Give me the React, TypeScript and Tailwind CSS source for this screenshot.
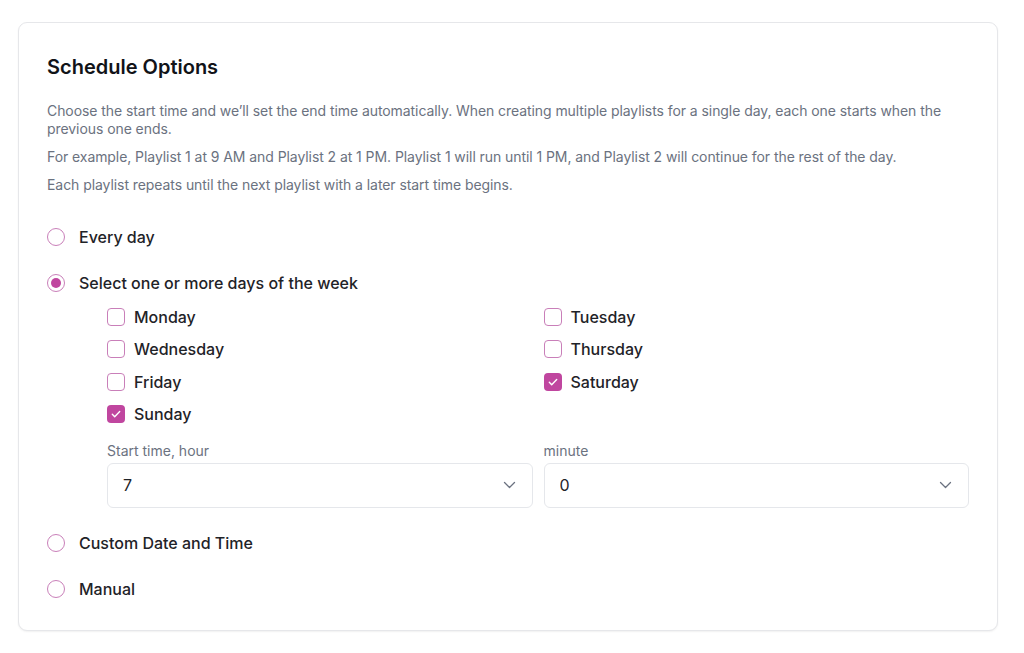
import { useState } from "react";

const DAYS = ["Monday", "Tuesday", "Wednesday", "Thursday", "Friday", "Saturday", "Sunday"];

type Mode = "everyday" | "weekdays" | "custom" | "manual";

function Radio({ checked, label, onClick }: { checked: boolean; label: string; onClick: () => void }) {
  return (
    <button type="button" onClick={onClick} className="flex h-[24px] items-center gap-[14px] text-left">
      <span className="flex h-[18px] w-[18px] items-center justify-center rounded-full border-[1.5px] border-[#c97fb9] bg-white">
        {checked && <span className="h-[10px] w-[10px] rounded-full bg-[#c0469f]" />}
      </span>
      <span className="text-[16px] font-medium text-[#1f2328]">{label}</span>
    </button>
  );
}

function Checkbox({ checked, label, onClick }: { checked: boolean; label: string; onClick: () => void }) {
  return (
    <button type="button" onClick={onClick} className="flex h-[24px] items-center gap-[9px] text-left">
      {checked ? (
        <span className="flex h-[18px] w-[18px] items-center justify-center rounded-[4px] bg-[#c0469f]">
          <svg width="12" height="12" viewBox="0 0 12 12" fill="none" stroke="white" strokeWidth="1.4" strokeLinecap="round" strokeLinejoin="round">
            <path d="M2.3 6.3l2.4 2.4 5-5.2" />
          </svg>
        </span>
      ) : (
        <span className="h-[18px] w-[18px] rounded-[4px] border-[1.5px] border-[#c97fb9] bg-white" />
      )}
      <span className="text-[16px] font-medium text-[#1f2328]">{label}</span>
    </button>
  );
}

function SelectBox({ label, value, options, onChange }: { label: string; value: number; options: number[]; onChange: (v: number) => void }) {
  return (
    <label className="flex flex-col">
      <span className="mb-[2px] text-[14px] leading-[20px] text-[#6b7280]">{label}</span>
      <div className="relative">
        <select
          value={value}
          onChange={(e) => onChange(Number(e.target.value))}
          className="h-[45px] w-full appearance-none rounded-[6px] border border-[#e5e7eb] bg-white pl-[15px] text-[16px] text-[#1f2328] outline-none"
        >
          {options.map((o) => (
            <option key={o} value={o}>
              {o}
            </option>
          ))}
        </select>
        <svg
          className="pointer-events-none absolute right-[17px] top-1/2 -translate-y-1/2"
          width="13"
          height="8"
          viewBox="0 0 13 8"
          fill="none"
          stroke="#6b7280"
          strokeWidth="1.3"
          strokeLinecap="round"
          strokeLinejoin="round"
        >
          <path d="M1.5 1.5l5 5 5-5" />
        </svg>
      </div>
    </label>
  );
}

export default function App() {
  const [mode, setMode] = useState<Mode>("weekdays");
  const [days, setDays] = useState<string[]>(["Saturday", "Sunday"]);
  const [hour, setHour] = useState(7);
  const [minute, setMinute] = useState(0);

  const toggle = (d: string) =>
    setDays((prev) => (prev.includes(d) ? prev.filter((x) => x !== d) : [...prev, d]));

  return (
    <main className="min-h-screen bg-white pt-[22px] pl-[18px] pr-[26px] font-['Inter',sans-serif] antialiased">
      <div className="rounded-[9px] border border-[#e6e7ea] bg-white px-[28px] pt-[30px] pb-[29px] shadow-[0_1px_2px_rgba(0,0,0,0.06)]">
        <h2 className="mb-[21px] text-[20px] leading-[28px] font-semibold text-[#111318]">Schedule Options</h2>

        <div className="text-[14px] leading-[18px] tracking-[-0.07px] text-[#6b7280]">
          <p className="mb-[10px]">
            Choose the start time and we’ll set the end time automatically. When creating multiple playlists for a single day, each one starts when the previous one ends.
          </p>
          <p className="mb-[10px]">
            For example, Playlist 1 at 9 AM and Playlist 2 at 1 PM. Playlist 1 will run until 1 PM, and Playlist 2 will continue for the rest of the day.
          </p>
          <p>Each playlist repeats until the next playlist with a later start time begins.</p>
        </div>

        <div className="mt-[31px] flex flex-col">
          <Radio checked={mode === "everyday"} label="Every day" onClick={() => setMode("everyday")} />

          <div className="mt-[22px]">
            <Radio checked={mode === "weekdays"} label="Select one or more days of the week" onClick={() => setMode("weekdays")} />
            <div className="mt-[10px] ml-[60px]">
              <div className="grid grid-cols-2 gap-x-[11px] gap-y-[8.3px]">
                {DAYS.map((d) => (
                  <Checkbox key={d} checked={days.includes(d)} label={d} onClick={() => toggle(d)} />
                ))}
              </div>
              <div className="mt-[15px] grid grid-cols-2 gap-x-[11px]">
                <SelectBox label="Start time, hour" value={hour} options={Array.from({ length: 24 }, (_, i) => i)} onChange={setHour} />
                <SelectBox label="minute" value={minute} options={Array.from({ length: 60 }, (_, i) => i)} onChange={setMinute} />
              </div>
            </div>
          </div>

          <div className="mt-[23px]">
            <Radio checked={mode === "custom"} label="Custom Date and Time" onClick={() => setMode("custom")} />
          </div>
          <div className="mt-[22px]">
            <Radio checked={mode === "manual"} label="Manual" onClick={() => setMode("manual")} />
          </div>
        </div>
      </div>
    </main>
  );
}
